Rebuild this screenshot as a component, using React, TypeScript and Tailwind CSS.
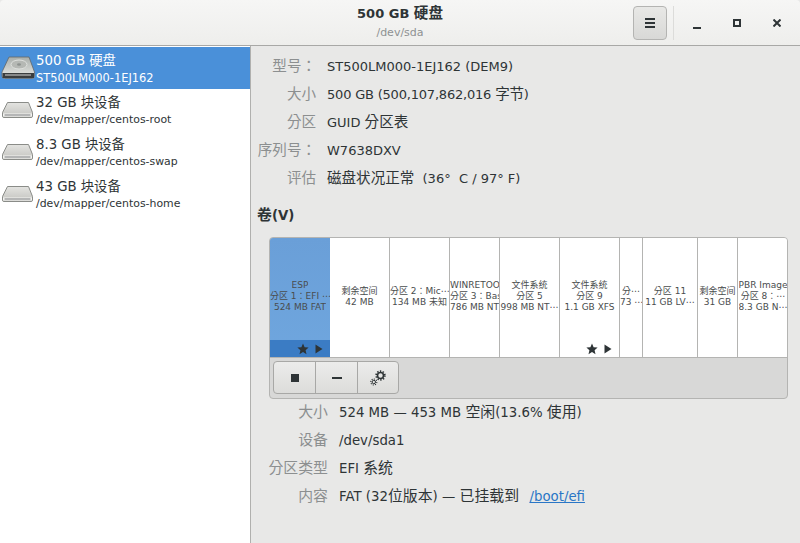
import { Fragment } from "react";

const font = "font-['DejaVu_Sans','Noto_Sans_CJK_TC','Noto_Sans_CJK_SC',sans-serif]";

// the CJK fallback in the screenshot runs wider than the latin text around it
const Wide = ({ text }: { text: string }) => (
  <>
    {text.split(/([\u3000-\u9fff\uff00-\uffef]+)/).map((part, i) =>
      i % 2 ? (
        <span key={i} className="text-[1.12em] leading-none">{part}</span>
      ) : (
        <Fragment key={i}>{part}</Fragment>
      ),
    )}
  </>
);

const DiskIcon = () => (
  <svg width="32" height="16" viewBox="0 0 32 16" className="shrink-0 ml-[2px] mr-[2px]">
    <defs>
      <linearGradient id="disk" x1="0" y1="0" x2="0" y2="1">
        <stop offset="0" stopColor="#e4e4e1" />
        <stop offset="1" stopColor="#c2c2be" />
      </linearGradient>
    </defs>
    <path d="M5.5 .5 H26.5 L30.5 10.5 V14 Q30.5 15.5 29 15.5 H2 Q.5 15.5 .5 14 V10.5 Z" fill="url(#disk)" stroke="#8a8c88" />
    <path d="M1 11.5 H30 V14.5 H1 Z" fill="#f4f4f2" />
    <path d="M2.5 13 H28.5" stroke="#77797a" />
  </svg>
);

const SelectedDiskIcon = () => (
  <svg width="34" height="24" viewBox="0 0 34 24" className="shrink-0 ml-px mr-px mt-[-1px]">
    <defs>
      <linearGradient id="disksel" x1="0" y1="0" x2="0" y2="1">
        <stop offset="0" stopColor="#a9aeaa" />
        <stop offset="1" stopColor="#e9eae7" />
      </linearGradient>
    </defs>
    <path d="M8 1 H28 L33.5 16 V20 Q33.5 22.5 31 22.5 H3.5 Q1 22.5 1 20 V16 Z" fill="url(#disksel)" stroke="#62676a" strokeWidth=".8" />
    <ellipse cx="18" cy="8.5" rx="8" ry="4.5" fill="#b5b8b4" stroke="#dfe1de" />
    <ellipse cx="18" cy="8.5" rx="2" ry="1.2" fill="#8e928f" />
    <path d="M1.5 17 H33 V22 H1.5 Z" fill="#3a3d3e" />
    <path d="M4 19 H30" stroke="#d4d5d3" />
  </svg>
);

const StarPlay = ({ strip }: { strip?: boolean }) => (
  <div className={`absolute bottom-0 inset-x-0 flex items-center justify-end gap-[6px] pr-[7px] h-[17px] ${strip ? "bg-[#3b7cc4]" : ""}`}>
    <svg width="12" height="12" viewBox="0 0 12 12">
      <path d="M6 .5 7.6 4.2 11.6 4.6 8.6 7.2 9.5 11.2 6 9.1 2.5 11.2 3.4 7.2 .4 4.6 4.4 4.2Z" fill="#2e3436" />
    </svg>
    <svg width="8" height="10" viewBox="0 0 8 10">
      <path d="M.5 .5 7.5 5 .5 9.5Z" fill="#2e3436" />
    </svg>
  </div>
);

const GearsIcon = () => (
  <svg width="16" height="16" viewBox="0 0 16 16" fill="none" stroke="#2e3436">
    <circle cx="10.5" cy="5.5" r="3" strokeWidth="1.6" />
    <circle cx="10.5" cy="5.5" r="4.4" strokeWidth="1.6" strokeDasharray="1.4 1.4" />
    <circle cx="3.8" cy="12" r="1.7" strokeWidth="1" />
    <circle cx="3.8" cy="12" r="3" strokeWidth="1.1" strokeDasharray="1.1 1.2" />
  </svg>
);

const drives = [
  { name: "500 GB 硬盘", sub: "ST500LM000-1EJ162", subClass: "text-[11.4px]", selected: true },
  { name: "32 GB 块设备", sub: "/dev/mapper/centos-root", subClass: "text-[10.9px]" },
  { name: "8.3 GB 块设备", sub: "/dev/mapper/centos-swap", subClass: "text-[10.9px]" },
  { name: "43 GB 块设备", sub: "/dev/mapper/centos-home", subClass: "text-[10.9px]" },
];

const driveInfo = [
  ["型号：", "ST500LM000-1EJ162 (DEM9)", ""],
  ["大小", "500 GB (500,107,862,016 字节)", "tracking-[-0.2px]"],
  ["分区", "GUID 分区表", ""],
  ["序列号：", "W7638DXV", ""],
  ["评估", "磁盘状况正常  (36°  C / 97° F)", ""],
];

const volumeInfo = [
  ["大小", "524 MB — 453 MB 空闲(13.6% 使用)"],
  ["设备", "/dev/sda1"],
  ["分区类型", "EFI 系统"],
];

const partitions = [
  { w: "w-[60px]", lines: ["ESP", "分区 1：EFI ⋯", "524 MB FAT"], selected: true, marks: true },
  { w: "w-[60px]", lines: ["剩余空间", "42 MB"] },
  { w: "w-[60px]", lines: ["分区 2：Mic⋯", "134 MB 未知"] },
  { w: "w-[50px]", lines: ["WINRETOOLS", "分区 3：Basic", "786 MB NTFS"] },
  { w: "w-[60px]", lines: ["文件系统", "分区 5", "998 MB NT⋯"] },
  { w: "w-[60px]", lines: ["文件系统", "分区 9", "1.1 GB XFS"], marks: true },
  { w: "w-[23px]", lines: ["分⋯", "73 ⋯"] },
  { w: "w-[55px]", lines: ["分区 11", "11 GB LV⋯"] },
  { w: "w-[40px]", lines: ["剩余空间", "31 GB"] },
  { w: "w-[50px]", lines: ["PBR Image", "分区 8：⋯", "8.3 GB N⋯"], last: true },
];

export default function App() {
  return (
    <div className={`${font} w-[800px] h-[543px] flex flex-col overflow-hidden bg-[#e8e8e7] text-[#2e3436]`}>
      <header className="h-[46px] shrink-0 flex items-center rounded-t-[4px] bg-gradient-to-b from-[#f6f6f5] to-[#eeeeec] border-b border-[#a8a8a6]">
        <div className="ml-[167px] w-[466px] flex flex-col items-center">
          <div className="text-[13px] font-bold leading-[18px]"><Wide text="500 GB 硬盘" /></div>
          <div className="text-[11px] leading-[16px] text-[#8e9192] mt-[2px]">/dev/sda</div>
        </div>
        <button className="w-[34px] h-[34px] flex flex-col items-center justify-center gap-[2px] rounded-[4px] border border-[#b4b4b2] bg-gradient-to-b from-[#e8e8e6] to-[#d8d8d6]">
          <span className="w-[10px] h-[2px] bg-[#2e3436]" />
          <span className="w-[10px] h-[2px] bg-[#2e3436]" />
          <span className="w-[10px] h-[2px] bg-[#2e3436]" />
        </button>
        <div className="w-px h-[34px] bg-[#dcdcda] ml-[6px]" />
        <div className="flex pl-[3px]">
          <div className="w-[40px] h-[16px] flex items-end justify-center pb-[2px]">
            <span className="w-[8px] h-[2px] bg-[#2e3436]" />
          </div>
          <div className="w-[40px] h-[16px] flex items-center justify-center">
            <span className="w-[8px] h-[8px] border-2 border-[#2e3436]" />
          </div>
          <div className="w-[40px] h-[16px] flex items-center justify-center">
            <svg width="8" height="8" viewBox="0 0 8 8" stroke="#2e3436" strokeWidth="2">
              <path d="M.5 .5 7.5 7.5 M7.5 .5 .5 7.5" />
            </svg>
          </div>
        </div>
      </header>

      <div className="flex flex-1 min-h-0">
        <aside className="w-[251px] shrink-0 bg-white border-r border-[#b0b0ae] pt-px">
          {drives.map((d) => (
            <div
              key={d.name}
              className={`h-[42px] flex items-center ${d.selected ? "bg-[#4a90d9] text-white" : ""}`}
            >
              {d.selected ? <SelectedDiskIcon /> : <DiskIcon />}
              <div className="min-w-0">
                <div className="text-[13.3px] leading-[19px]">{d.name}</div>
                <div className={`${d.subClass} leading-[16px]`}>{d.sub}</div>
              </div>
            </div>
          ))}
        </aside>

        <main className="flex-1 min-w-0 pt-[7px]">
          {driveInfo.map(([label, value, extra]) => (
            <div key={label} className="h-[28px] flex items-center text-[13px]">
              <div className="w-[65px] text-right text-[#8c8f90] whitespace-nowrap"><Wide text={label} /></div>
              <div className={`ml-[11px] whitespace-pre ${extra}`}><Wide text={value} /></div>
            </div>
          ))}
          <div className="mt-[13px] ml-[6px] text-[13.3px] font-bold leading-[20px]"><Wide text="卷(V)" /></div>

          <div className="mt-[11px] ml-[18px] w-[519px] h-[162px] rounded-[4px] border border-[#b4b4b2] overflow-hidden flex flex-col bg-[#d8d8d7]">
            <div className="h-[120px] shrink-0 flex border-b border-[#b4b4b2] text-[#4a4d4e] text-[9px] leading-[11px]">
              {partitions.map((p, i) => (
                <div
                  key={i}
                  className={`${p.w} relative shrink-0 flex flex-col justify-center overflow-hidden pb-[2px] ${p.last ? "" : "border-r border-[#b4b4b2]"} ${
                    p.selected ? "bg-gradient-to-b from-[#6a9fd8] to-[#6fa6de] border-r-0" : "bg-white"
                  }`}
                >
                  <div className="flex flex-col items-center whitespace-nowrap">
                    {p.lines.map((l) => (
                      <div key={l} className="max-w-full overflow-hidden text-center">{l}</div>
                    ))}
                  </div>
                  {p.marks ? <StarPlay strip={p.selected} /> : null}
                </div>
              ))}
            </div>
            <div className="flex pl-[3px] pt-[3px]">
              <div className="flex h-[33px] rounded-[4px] border border-[#a8a8a6] bg-gradient-to-b from-[#ececeb] to-[#dcdcda] overflow-hidden">
                <div className="w-[42px] flex items-center justify-center border-r border-[#a8a8a6]">
                  <div className="w-2 h-2 bg-[#2e3436]" />
                </div>
                <div className="w-[42px] flex items-center justify-center border-r border-[#a8a8a6]">
                  <div className="w-[10px] h-[2px] bg-[#2e3436]" />
                </div>
                <div className="w-[40px] flex items-center justify-center">
                  <GearsIcon />
                </div>
              </div>
            </div>
          </div>

          <div>
            {volumeInfo.map(([label, value]) => (
              <div key={label} className="h-[28px] flex items-center text-[13.3px]">
                <div className="w-[77px] text-right text-[#8c8f90] whitespace-nowrap"><Wide text={label} /></div>
                <div className="ml-[11px] whitespace-pre"><Wide text={value} /></div>
              </div>
            ))}
            <div className="h-[28px] flex items-center text-[13.3px]">
              <div className="w-[77px] text-right text-[#8c8f90]"><Wide text="内容" /></div>
              <div className="ml-[11px] whitespace-pre"><Wide text="FAT (32位版本) — 已挂载到  " /></div>
              <a href="#boot" className="ml-[2px] text-[#2a76c6] underline">/boot/efi</a>
            </div>
          </div>
        </main>
      </div>
    </div>
  );
}
